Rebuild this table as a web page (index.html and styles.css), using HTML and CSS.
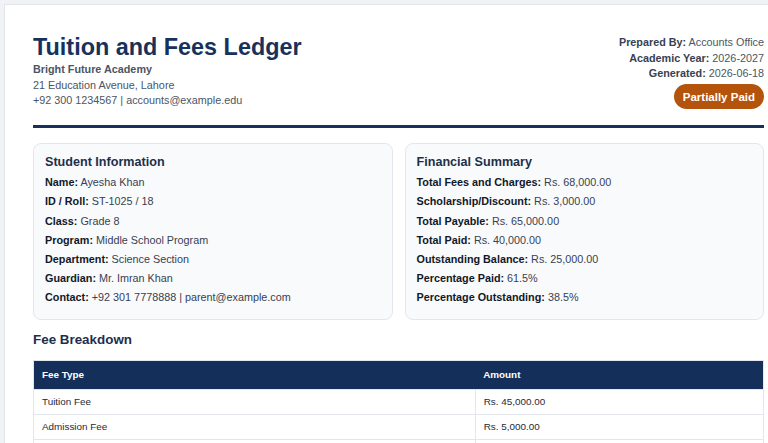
FILE: index.html
```html
<!DOCTYPE html>
<html lang="en">
<head>
<meta charset="utf-8">
<title>Tuition and Fees Ledger</title>
<link rel="stylesheet" href="styles.css">
</head>
<body>
<div class="page">
  <header class="header">
    <div class="school">
      <h1 class="title">Tuition and Fees Ledger</h1>
      <div class="school-name">Bright Future Academy</div>
      <div class="school-line">21 Education Avenue, Lahore</div>
      <div class="school-line">+92 300 1234567 | accounts@example.edu</div>
    </div>
    <div class="meta">
      <div class="meta-line"><b>Prepared By:</b> Accounts Office</div>
      <div class="meta-line"><b>Academic Year:</b> 2026-2027</div>
      <div class="meta-line"><b>Generated:</b> 2026-06-18</div>
      <span class="badge">Partially Paid</span>
    </div>
  </header>

  <section class="cards">
    <div class="card">
      <h2 class="card-title">Student Information</h2>
      <div class="row"><b>Name:</b> Ayesha Khan</div>
      <div class="row"><b>ID / Roll:</b> ST-1025 / 18</div>
      <div class="row"><b>Class:</b> Grade 8</div>
      <div class="row"><b>Program:</b> Middle School Program</div>
      <div class="row"><b>Department:</b> Science Section</div>
      <div class="row"><b>Guardian:</b> Mr. Imran Khan</div>
      <div class="row"><b>Contact:</b> +92 301 7778888 | parent@example.com</div>
    </div>
    <div class="card">
      <h2 class="card-title">Financial Summary</h2>
      <div class="row"><b>Total Fees and Charges:</b> Rs. 68,000.00</div>
      <div class="row"><b>Scholarship/Discount:</b> Rs. 3,000.00</div>
      <div class="row"><b>Total Payable:</b> Rs. 65,000.00</div>
      <div class="row"><b>Total Paid:</b> Rs. 40,000.00</div>
      <div class="row"><b>Outstanding Balance:</b> Rs. 25,000.00</div>
      <div class="row"><b>Percentage Paid:</b> 61.5%</div>
      <div class="row"><b>Percentage Outstanding:</b> 38.5%</div>
    </div>
  </section>

  <h2 class="section-title">Fee Breakdown</h2>
  <table class="fees">
    <thead>
      <tr><th class="col-type">Fee Type</th><th>Amount</th></tr>
    </thead>
    <tbody>
      <tr><td>Tuition Fee</td><td>Rs. 45,000.00</td></tr>
      <tr><td>Admission Fee</td><td>Rs. 5,000.00</td></tr>
      <tr><td>Examination Fee</td><td>Rs. 5,000.00</td></tr>
      <tr><td>Transport Fee</td><td>Rs. 7,000.00</td></tr>
      <tr><td>Library Fee</td><td>Rs. 3,000.00</td></tr>
      <tr><td>Laboratory Fee</td><td>Rs. 3,000.00</td></tr>
    </tbody>
  </table>
</div>
</body>
</html>
```

FILE: styles.css
```css
html {
  scrollbar-width: none;
}
body {
  margin: 0;
  padding: 4px;
  background: #f1f2f5;
  font-family: "Liberation Sans", Arial, sans-serif;
  color: #374151;
  overflow-x: hidden;
}
.page {
  box-sizing: border-box;
  width: 789px;
  background: #ffffff;
  border: 1px solid #e3e5ea;
  padding: 28px 28px 40px 28px;
}
.header {
  display: flex;
  justify-content: space-between;
  align-items: flex-start;
  padding-bottom: 16px;
  border-bottom: 3px solid #16325c;
}
.title {
  margin: 0 0 1px 0;
  font-size: 23.4px;
  line-height: 28px;
  font-weight: bold;
  color: #16325c;
}
.school-name {
  font-size: 10.8px;
  line-height: 15.7px;
  font-weight: bold;
  color: #4b5563;
}
.school-line {
  font-size: 10.8px;
  line-height: 15.7px;
  color: #4b5563;
}
.meta {
  display: flex;
  flex-direction: column;
  align-items: flex-end;
  padding-top: 2px;
}
.meta-line {
  font-size: 10.8px;
  line-height: 15.7px;
  color: #4b5563;
}
.meta-line b {
  color: #374151;
}
.badge {
  margin-top: 2px;
  display: inline-block;
  background: #b4530c;
  color: #ffffff;
  font-weight: bold;
  font-size: 11.5px;
  line-height: 14px;
  padding: 5.5px 9px;
  border-radius: 13px;
}
.cards {
  display: grid;
  grid-template-columns: 1fr 1fr;
  gap: 12px;
  margin-top: 15px;
}
.card {
  background: #f9fafc;
  border: 1px solid #e3e6ec;
  border-radius: 8px;
  padding: 11px;
}
.card-title {
  margin: 0 0 3.5px 0;
  font-size: 12.6px;
  line-height: 14.5px;
  font-weight: bold;
  color: #1e2f4a;
}
.row {
  font-size: 10.8px;
  line-height: 19.2px;
  color: #374151;
}
.row b {
  color: #111827;
}
.section-title {
  margin: 12px 0 12px 0;
  font-size: 13.4px;
  line-height: 16px;
  font-weight: bold;
  color: #1e2f4a;
}
.fees {
  width: 100%;
  border-collapse: collapse;
  border: 1px solid #e3e6ec;
  font-size: 9.9px;
  line-height: 12px;
}
.fees th {
  background: #14305a;
  color: #ffffff;
  text-align: left;
  font-weight: bold;
  padding: 8px;
}
.fees .col-type {
  width: 60.5%;
}
.fees td {
  padding: 6px 8px;
  border: 1px solid #e3e6ec;
  color: #1f2937;
}
```
